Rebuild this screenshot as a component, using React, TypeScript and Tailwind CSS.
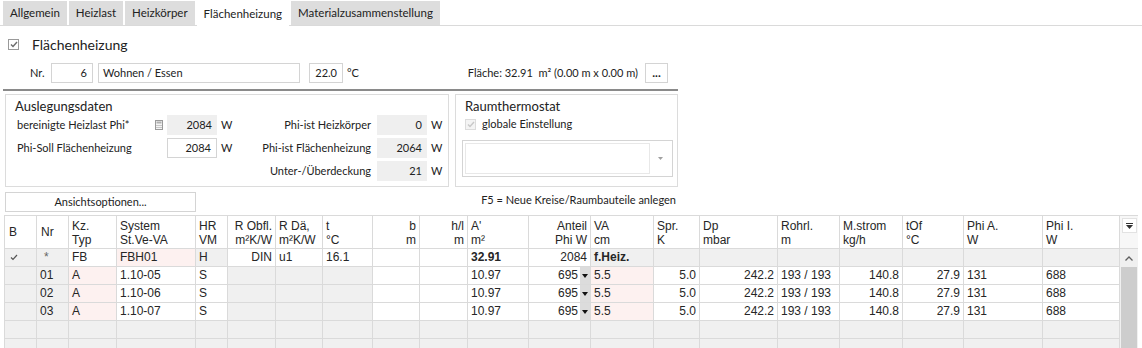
import React from 'react';

const ui = "font-['Lato','Noto_Sans',sans-serif]";

const Check = ({ disabled = false }: { disabled?: boolean }) => (
  <span
    className={`flex h-[11px] w-[11px] shrink-0 items-center justify-center border ${
      disabled ? 'border-[#dcdcdc] bg-[#f4f4f4]' : 'border-[#9a9a9a] bg-white'
    }`}
  >
    <svg width="8" height="7" viewBox="0 0 8 7">
      <path d="M1 3.5 L3 5.5 L7 1" fill="none" stroke={disabled ? '#c8c8c8' : '#6b6b6b'} strokeWidth="1.4" />
    </svg>
  </span>
);

const Field = ({ value, w, ro = false }: { value: string; w: string; ro?: boolean }) => (
  <div
    className={`flex h-[20px] shrink-0 items-center justify-end px-[5px] ${w} ${
      ro ? 'bg-[#efefef]' : 'border border-[#d4d4d4] bg-white'
    }`}
  >
    {value}
  </div>
);

type Col = { w: string; h1: string; h2: string; hr?: boolean };

const cols: Col[] = [
  { w: 'w-[32px]', h1: 'B', h2: '' },
  { w: 'w-[32px]', h1: 'Nr', h2: '' },
  { w: 'w-[48px]', h1: 'Kz.', h2: 'Typ' },
  { w: 'w-[79px]', h1: 'System', h2: 'St.Ve-VA' },
  { w: 'w-[32px]', h1: 'HR', h2: 'VM' },
  { w: 'w-[48px]', h1: 'R Obfl.', h2: 'm²K/W', hr: true },
  { w: 'w-[47px]', h1: 'R Dä,', h2: 'm²K/W' },
  { w: 'w-[50px]', h1: 't', h2: '°C' },
  { w: 'w-[47px]', h1: 'b', h2: 'm', hr: true },
  { w: 'w-[48px]', h1: 'h/l', h2: 'm', hr: true },
  { w: 'w-[61px]', h1: "A'", h2: 'm²' },
  { w: 'w-[62px]', h1: 'Anteil', h2: 'Phi W', hr: true },
  { w: 'w-[63px]', h1: 'VA', h2: 'cm' },
  { w: 'w-[46px]', h1: 'Spr.', h2: 'K' },
  { w: 'w-[78px]', h1: 'Dp', h2: 'mbar' },
  { w: 'w-[62px]', h1: 'Rohrl.', h2: 'm' },
  { w: 'w-[63px]', h1: 'M.strom', h2: 'kg/h' },
  { w: 'w-[61px]', h1: 'tOf', h2: '°C' },
  { w: 'w-[79px]', h1: 'Phi A.', h2: 'W' },
  { w: 'w-[77px]', h1: 'Phi I.', h2: 'W' },
];

// g = grey, p = pink, w = white
const sumBg = 'ggwpgwwwwwwwgggggggg';
const rowBg = 'ggpwwgggwwwwpwwwwwww';
const bgCls: Record<string, string> = { g: 'bg-[#f0f0f0]', p: 'bg-[#fdf1f0]', w: 'bg-white' };

// alignment of data cells
const align = 'llllllllrrlrlrrlrrll';
const sumAlign = 'lllllrllrrlrllllllll';

const dataRows = [
  ['', '01', 'A', '1.10-05', 'S', '', '', '', '', '', '10.97', '695', '5.5', '5.0', '242.2', '193 / 193', '140.8', '27.9', '131', '688'],
  ['', '02', 'A', '1.10-06', 'S', '', '', '', '', '', '10.97', '695', '5.5', '5.0', '242.2', '193 / 193', '140.8', '27.9', '131', '688'],
  ['', '03', 'A', '1.10-07', 'S', '', '', '', '', '', '10.97', '695', '5.5', '5.0', '242.2', '193 / 193', '140.8', '27.9', '131', '688'],
];
const sumRow = ['', '*', 'FB', 'FBH01', 'H', 'DIN', 'u1', '16.1', '', '', '32.91', '2084', 'f.Heiz.', '', '', '', '', '', '', ''];

const cell = 'h-[18px] shrink-0 border-r border-b border-[#dadada] px-[3px] leading-[17px] whitespace-nowrap overflow-hidden';

function Table() {
  return (
    <div className="ml-[4px] flex w-[1134px] border-t border-l border-[#dadada] font-['Liberation_Sans',Arial,sans-serif] text-[12px] text-[#262626]">
      <div className="flex flex-col">
        {/* header */}
        <div className="flex bg-white">
          {cols.map((c, i) => (
            <div
              key={i}
              className={`${c.w} h-[33px] shrink-0 border-r border-b border-[#dadada] px-[3px] leading-[14px] ${
                c.hr ? 'text-right' : 'text-left'
              } ${c.h2 ? 'pt-[3px]' : 'flex items-center pl-[4px]'}`}
            >
              <div>{c.h1}</div>
              {c.h2 && <div>{c.h2}</div>}
            </div>
          ))}
        </div>
        {/* summary row */}
        <div className="flex">
          {cols.map((c, i) => (
            <div
              key={i}
              className={`${cell} ${c.w} ${bgCls[sumBg[i]]} ${sumAlign[i] === 'r' ? 'text-right' : 'text-left'} ${
                i === 10 || i === 12 ? 'font-bold' : ''
              }`}
            >
              {i === 0 ? (
                <span className="pl-[2px]">
                  <svg width="8" height="7" viewBox="0 0 8 7" className="inline">
                    <path d="M1 3.5 L3 5.5 L7 1" fill="none" stroke="#555" strokeWidth="1.2" />
                  </svg>
                </span>
              ) : i === 1 ? (
                <span className="pl-[4px] text-[#666]">*</span>
              ) : (
                sumRow[i]
              )}
            </div>
          ))}
        </div>
        {dataRows.map((r, ri) => (
          <div key={ri} className="flex">
            {cols.map((c, i) =>
              i === 11 ? (
                <div key={i} className={`${cell} ${c.w} flex bg-white !pr-0`}>
                  <span className="flex-1 pr-[2px] text-right">{r[i]}</span>
                  <span className="flex w-[10px] items-center justify-center bg-[#dcdcdc]">
                    <svg width="6" height="4" viewBox="0 0 6 4">
                      <path d="M0 0 H6 L3 4 Z" fill="#111" />
                    </svg>
                  </span>
                </div>
              ) : (
                <div
                  key={i}
                  className={`${cell} ${c.w} ${bgCls[rowBg[i]]} ${align[i] === 'r' ? 'text-right' : 'text-left'}`}
                >
                  {r[i]}
                </div>
              )
            )}
          </div>
        ))}
        {[0, 1].map((k) => (
          <div key={k} className="flex">
            {cols.map((c, i) => (
              <div key={i} className={`${cell} ${c.w} bg-[#f0f0f0]`} />
            ))}
          </div>
        ))}
      </div>
      {/* scrollbar column */}
      <div className="flex w-[18px] flex-col">
        <div className="flex h-[33px] items-start justify-center border-b border-[#dadada] bg-[#f7f7f7] pt-[2px]">
          <div className="flex h-[15px] w-[15px] items-center justify-center border border-[#e2e2e2] bg-white">
            <svg width="7" height="6" viewBox="0 0 7 6">
              <rect x="0" y="0" width="7" height="1" fill="#333" />
              <path d="M0 2 H7 L3.5 6 Z" fill="#333" />
            </svg>
          </div>
        </div>
        <div className="flex flex-1 flex-col bg-[#f0f0f0]">
          <div className="flex h-[18px] items-center justify-center">
            <svg width="8" height="5" viewBox="0 0 8 5">
              <path d="M0.5 4.5 L4 1 L7.5 4.5" fill="none" stroke="#606060" strokeWidth="1.3" />
            </svg>
          </div>
          <div className="mx-[1px] flex-1 bg-[#cdcdcd]" />
        </div>
      </div>
    </div>
  );
}

export default function App() {
  const tabs = ['Allgemein', 'Heizlast', 'Heizkörper', 'Flächenheizung', 'Materialzusammenstellung'];
  return (
    <div className={`h-[348px] w-[1142px] overflow-hidden bg-white text-[11px] text-[#222] ${ui}`}>
      {/* tabs */}
      <div className="flex h-[26px] gap-[2px] border-b border-[#dadada] pl-[3px] pt-[1px] text-[11.5px]">
        {tabs.map((t) => (
          <div
            key={t}
            className={`flex items-center px-[7px] ${
              t === 'Flächenheizung' ? 'mb-[-1px] bg-white' : 'bg-[#dddddd]'
            }`}
          >
            {t}
          </div>
        ))}
      </div>

      <div className="flex h-[36px] items-center gap-[13px] pl-[8px]">
        <Check />
        <span className="text-[14px]">Flächenheizung</span>
      </div>

      <div className="mt-[1px] flex h-[20px] w-[668px] items-center">
        <span className="ml-[30px] w-[21px]">Nr.</span>
        <Field value="6" w="w-[42px]" />
        <div className="ml-[5px] flex h-[20px] w-[202px] items-center border border-[#d4d4d4] px-[4px]">Wohnen / Essen</div>
        <div className="ml-[9px]">
          <Field value="22.0" w="w-[34px]" />
        </div>
        <span className="ml-[4px]">°C</span>
        <span className="ml-auto mr-[7px]">
          Fläche: 32.91&nbsp;&nbsp;m² (0.00 m x 0.00 m)
        </span>
        <div className="flex h-[20px] w-[23px] items-center justify-center border border-[#d4d4d4] text-[12px] font-bold leading-none">
          ...
        </div>
      </div>

      <div className="ml-[3px] mt-[6px] h-[2px] w-[675px] bg-[#8a8a8a]" />

      <div className="mt-[3px] flex gap-[6px] pl-[5px]">
        {/* left column */}
        <div className="flex flex-col">
          <div className="h-[93px] w-[444px] border border-[#dcdcdc] pl-[9px] pt-[2px]">
            <div className="text-[13px] leading-[18px]">Auslegungsdaten</div>
            <div className="flex">
              <div className="flex w-[206px] flex-col gap-[3px]">
                <div className="flex h-[20px] items-center">
                  <span className="w-[140px] shrink-0 whitespace-nowrap pl-[2px]">bereinigte Heizlast Phi*</span>
                  <svg width="8" height="10" viewBox="0 0 8 10" className="mr-[4px] shrink-0">
                    <rect x="0.5" y="0.5" width="7" height="9" fill="#f4f4f4" stroke="#9a9a9a" />
                    <rect x="1.5" y="1.5" width="5" height="2" fill="#b0b0b0" />
                    <rect x="1.5" y="5" width="1" height="1" fill="#9a9a9a" />
                    <rect x="3.5" y="5" width="1" height="1" fill="#9a9a9a" />
                    <rect x="5.5" y="5" width="1" height="1" fill="#9a9a9a" />
                    <rect x="1.5" y="7" width="1" height="1" fill="#9a9a9a" />
                    <rect x="3.5" y="7" width="1" height="1" fill="#9a9a9a" />
                    <rect x="5.5" y="7" width="1" height="1" fill="#9a9a9a" />
                  </svg>
                  <Field value="2084" w="w-[50px]" ro />
                  <span className="ml-[4px]">W</span>
                </div>
                <div className="flex h-[20px] items-center">
                  <span className="w-[152px] shrink-0 whitespace-nowrap pl-[2px]">Phi-Soll Flächenheizung</span>
                  <Field value="2084" w="w-[50px]" />
                  <span className="ml-[4px]">W</span>
                </div>
              </div>
              <div className="flex flex-col gap-[3px]">
                {[
                  ['Phi-ist Heizkörper', '0'],
                  ['Phi-ist Flächenheizung', '2064'],
                  ['Unter-/Überdeckung', '21'],
                ].map(([l, v]) => (
                  <div key={l} className="flex h-[20px] items-center">
                    <span className="w-[156px] shrink-0 whitespace-nowrap pr-[6px] text-right">{l}</span>
                    <Field value={v} w="w-[50px]" ro />
                    <span className="ml-[4px]">W</span>
                  </div>
                ))}
              </div>
            </div>
          </div>
          <div className="mt-[5px] flex h-[20px] w-[191px] items-center justify-center border border-[#d4d4d4]">
            Ansichtsoptionen...
          </div>
        </div>

        {/* right column */}
        <div className="flex flex-col">
          <div className="h-[93px] w-[223px] border border-[#dcdcdc] pl-[6px] pr-[4px] pt-[2px]">
            <div className="pl-[3px] text-[13px] leading-[18px]">Raumthermostat</div>
            <div className="mt-[4px] flex h-[11px] items-center gap-[6px] pl-[3px]">
              <Check disabled />
              <span>globale Einstellung</span>
            </div>
            <div className="mt-[10px] flex h-[37px] items-center border border-[#d4d4d4] p-[2px]">
              <div className="h-full flex-1 border border-[#e8e8e8] bg-white" />
              <div className="flex w-[20px] justify-center">
                <svg width="5" height="3" viewBox="0 0 5 3">
                  <path d="M0 0 H5 L2.5 3 Z" fill="#a0a0a0" />
                </svg>
              </div>
            </div>
          </div>
          <div className="mt-[5px] pr-[2px] text-right">F5 = Neue Kreise/Raumbauteile anlegen</div>
        </div>
      </div>

      <div className="mt-[3px]">
        <Table />
      </div>
    </div>
  );
}
